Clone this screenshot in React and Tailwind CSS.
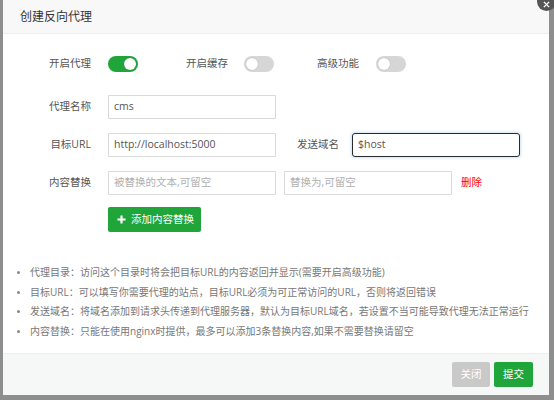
import React from "react";

const FONT = { fontFamily: '"Open Sans", "Noto Sans CJK SC", sans-serif' };

function Toggle({ on }) {
  return (
    <div
      className={
        "w-[30px] h-[16px] rounded-full flex items-center px-[2px] " +
        (on ? "bg-[#20a53a] justify-end" : "bg-[#d6d6d6] justify-start")
      }
    >
      <div className="w-[12px] h-[12px] rounded-full bg-white shadow-[0_0_1px_rgba(0,0,0,0.3)]" />
    </div>
  );
}

function Input({ value, placeholder, focused, w = "w-[168px]" }) {
  return (
    <div
      className={
        w +
        " h-[24px] flex items-center pl-[5px] text-[10.5px] bg-white " +
        (focused
          ? "border-[1.5px] border-[#2a2a2a] rounded-[3px] shadow-[0_0_3px_1px_rgba(120,170,230,0.35)] pl-[4px]"
          : "border border-[#d9d9d9] rounded-[1px]")
      }
    >
      {value ? (
        <span className="text-[#555]">{value}</span>
      ) : (
        <span className="text-[#b0b0b0]">{placeholder}</span>
      )}
    </div>
  );
}

function Label({ children }) {
  return (
    <div className="w-[88px] text-right text-[10.5px] text-[#555] shrink-0">{children}</div>
  );
}

const tips = [
  "代理目录：访问这个目录时将会把目标URL的内容返回并显示(需要开启高级功能)",
  "目标URL：可以填写你需要代理的站点，目标URL必须为可正常访问的URL，否则将返回错误",
  "发送域名：将域名添加到请求头传递到代理服务器，默认为目标URL域名，若设置不当可能导致代理无法正常运行",
  "内容替换：只能在使用nginx时提供，最多可以添加3条替换内容,如果不需要替换请留空",
];

export default function App() {
  return (
    <div
      className="relative w-[554px] h-[400px] bg-[#8e8e8e] overflow-hidden pl-[3px]"
      style={FONT}
    >
      <div className="w-[546px] h-[395px] bg-white flex flex-col">
        {/* header */}
        <div className="h-[34px] shrink-0 bg-[#f8f8f8] border-b border-[#eeeeee] flex items-center pl-[17px] text-[12px] text-[#333]">
          创建反向代理
        </div>

        {/* body */}
        <div className="flex-1 flex flex-col pt-[18px]">
          {/* toggles */}
          <div className="flex items-center h-[24px]">
            <Label>开启代理</Label>
            <div className="ml-[17px]">
              <Toggle on />
            </div>
            <div className="ml-[48px] text-[10.5px] text-[#555]">开启缓存</div>
            <div className="ml-[16px]">
              <Toggle />
            </div>
            <div className="ml-[43px] text-[10.5px] text-[#555]">高级功能</div>
            <div className="ml-[17px]">
              <Toggle />
            </div>
          </div>

          <div className="flex items-center mt-[19px]">
            <Label>代理名称</Label>
            <div className="ml-[17px]">
              <Input value="cms" />
            </div>
          </div>

          <div className="flex items-center mt-[14px]">
            <Label>目标URL</Label>
            <div className="ml-[17px]">
              <Input value="http://localhost:5000" />
            </div>
            <div className="ml-[21px] text-[10.5px] text-[#555]">发送域名</div>
            <div className="ml-[13px]">
              <Input value="$host" focused />
            </div>
          </div>

          <div className="flex items-center mt-[14px]">
            <Label>内容替换</Label>
            <div className="ml-[17px]">
              <Input placeholder="被替换的文本,可留空" />
            </div>
            <div className="ml-[8px]">
              <Input placeholder="替换为,可留空" />
            </div>
            <div className="ml-[9px] text-[10.5px] text-[#f00]">删除</div>
          </div>

          <div className="flex mt-[12px] pl-[105px]">
            <div className="h-[25px] w-[93px] bg-[#20a53a] rounded-[2px] flex items-center pl-[9px] text-white text-[10.5px]">
              <svg width="9" height="9" viewBox="0 0 10 10" className="mr-[5px]">
                <path d="M5 0.5v9M0.5 5h9" stroke="white" strokeWidth="2.4" />
              </svg>
              添加内容替换
            </div>
          </div>

          <ul className="mt-[31px] pl-[14px] text-[10px] text-[#777] leading-[19.5px]">
            {tips.map((t) => (
              <li key={t} className="flex items-center whitespace-nowrap">
                <span className="w-[3px] h-[3px] rounded-full bg-[#888] mr-[10px] shrink-0" />
                {t}
              </li>
            ))}
          </ul>
        </div>

        {/* footer */}
        <div className="h-[42px] shrink-0 bg-[#f6f8f8] border-t border-[#eeeeee] flex items-center justify-end pr-[16px] gap-[4px]">
          <div className="h-[25px] w-[38px] bg-[#c9c9c9] rounded-[2px] flex items-center justify-center text-white text-[10.5px]">
            关闭
          </div>
          <div className="h-[25px] w-[39px] bg-[#20a53a] rounded-[2px] flex items-center justify-center text-white text-[10.5px]">
            提交
          </div>
        </div>
      </div>

      {/* close button */}
      <div className="absolute left-[537px] top-[-8px] w-[19px] h-[19px] rounded-full bg-[#555] flex items-end justify-center pb-[3px]">
        <svg width="7" height="7" viewBox="0 0 8 8">
          <path d="M1 1l6 6M7 1L1 7" stroke="white" strokeWidth="1.6" />
        </svg>
      </div>
    </div>
  );
}
